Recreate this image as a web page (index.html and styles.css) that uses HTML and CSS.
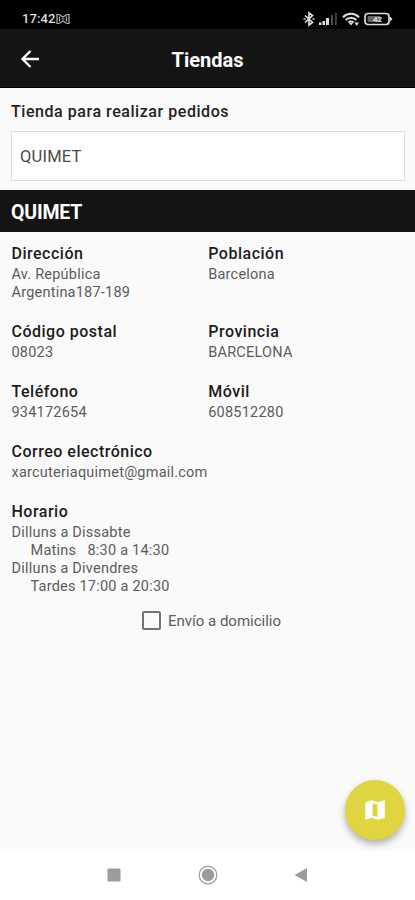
FILE: index.html
```
<!DOCTYPE html>
<html lang="es">
<head>
    <meta charset="UTF-8">
    <meta name="viewport" content="width=device-width, initial-scale=1.0">
    <title>Tiendas</title>
    <link rel="stylesheet" href="styles.css">
</head>
<body>
    <div class="status-bar">
        <span class="clock">17:42</span>
        <svg class="icon-notify" width="14" height="12" viewBox="0 0 14 12" fill="none" stroke="#b4b4b4" stroke-width="1.2">
            <path d="M1 10.500V1.500h2L7 4l4-2.500h2v9h-2L7 8l-4 2.500z"/>
            <path d="M3.500 3.500v5M10.500 3.500v5M5.500 6h3"/>
        </svg>
        <div class="status-icons">
            <svg width="12" height="16" viewBox="0 0 12 16" fill="none" stroke="#dedede" stroke-width="1.700">
                <path d="M2 4.500l7.500 7L6 14V2l3.500 2.500L2 11.500"/>
                <path d="M.5 8h2M9.500 8h2"/>
            </svg>
            <svg width="19" height="14" viewBox="0 0 19 14">
                <path fill="#dedede" d="M0 10.500h2.500v2.500H0zM3.500 9H6v4H3.500zM7 6h3v7H7z"/>
                <path fill="#4c4c4c" d="M12 3h2v10h-2zM16.200 1h1.500v12h-1.500z"/>
            </svg>
            <svg width="18" height="14" viewBox="0 0 18 14" fill="none" stroke="#dedede" stroke-width="2.100">
                <path d="M1 5.200c4.500-4.600 11.500-4.600 16 0M3.700 8c3-3 7.600-3 10.600 0M6.400 10.600c1.500-1.500 3.700-1.500 5.200 0"/>
                <path fill="#dedede" stroke="none" d="M7 11h4L9 13.500zM12.500 10.500H17L14.800 14z"/>
            </svg>
            <svg width="29" height="14" viewBox="0 0 29 14">
                <rect x="1" y="1.500" width="24" height="11" rx="3" fill="none" stroke="#dedede" stroke-width="1.700"/>
                <rect x="3.500" y="4" width="13" height="6" rx="1" fill="#666"/>
                <path fill="#dedede" d="M26 4.500l2.500 2.500L26 9.500z"/>
                <text x="13.500" y="10" class="battery-text">42</text>
            </svg>
        </div>
    </div>

    <header class="header">
        <svg class="back" width="24" height="24" viewBox="0 0 24 24" fill="none" stroke="#fff" stroke-width="2.400">
            <path d="M21 12H5M12.500 4L4.500 12l8 8"/>
        </svg>
        <h1>Tiendas</h1>
    </header>

    <main class="content">
        <div class="store-select">
            <label for="store">Tienda para realizar pedidos</label>
            <input type="text" id="store" value="QUIMET" readonly>
        </div>

        <h2 class="store-name">QUIMET</h2>

        <div class="details">
            <div class="field">
                <h3>Dirección</h3>
                <p>Av. República<br>Argentina187-189</p>
            </div>
            <div class="field">
                <h3>Población</h3>
                <p>Barcelona</p>
            </div>
            <div class="field">
                <h3>Código postal</h3>
                <p>08023</p>
            </div>
            <div class="field">
                <h3>Provincia</h3>
                <p>BARCELONA</p>
            </div>
            <div class="field">
                <h3>Teléfono</h3>
                <p>934172654</p>
            </div>
            <div class="field">
                <h3>Móvil</h3>
                <p>608512280</p>
            </div>
            <div class="field wide">
                <h3>Correo electrónico</h3>
                <p>xarcuteriaquimet@gmail.com</p>
            </div>
            <div class="field wide">
                <h3>Horario</h3>
                <p>Dilluns a Dissabte</p>
                <p class="hours"><span class="shift">Matins</span>8:30 a 14:30</p>
                <p>Dilluns a Divendres</p>
                <p class="hours">Tardes 17:00 a 20:30</p>
            </div>
        </div>

        <div class="delivery">
            <span class="checkbox"></span>
            <span>Envío a domicilio</span>
        </div>

        <!-- Map button -->
        <button class="fab" aria-label="Mapa">
            <svg width="22" height="22" viewBox="0 0 22 22">
                <path fill="#fff" fill-rule="evenodd" d="M1.300 3.200L7.500 1.200l7 2 5.700-2c.3-.1.600.1.600.5v17L14.500 20.800l-7-2-5.600 2c-.3.100-.6-.1-.6-.5zM8.500 4.200v12.300l5 1.500V5.700z"/>
            </svg>
        </button>
    </main>

    <nav class="nav-bar">
        <svg width="14" height="14" viewBox="0 0 14 14"><rect x=".5" y=".5" width="13" height="13" rx="1" fill="#9c9c9c"/></svg>
        <svg width="20" height="20" viewBox="0 0 20 20">
            <circle cx="10" cy="10" r="8.800" fill="none" stroke="#a4a4a4" stroke-width="1.400"/>
            <circle cx="10" cy="10" r="6.200" fill="#9c9c9c"/>
        </svg>
        <svg width="14" height="16" viewBox="0 0 14 16"><path fill="#9c9c9c" d="M13 1v14L.5 8z"/></svg>
    </nav>
</body>
</html>
```

FILE: styles.css
```
* {
    margin: 0;
    padding: 0;
    box-sizing: border-box;
}

body {
    font-family: Roboto, sans-serif;
    background: #fafafa;
    color: #5c5c5c;
    height: 900px;
    display: flex;
    flex-direction: column;
    overflow: hidden;
}

.status-bar {
    height: 29px;
    background: #000;
    display: flex;
    align-items: center;
    padding: 8px 22px 0 22px;
}

.clock {
    color: #dedede;
    font-size: 13px;
    font-weight: 500;
    letter-spacing: 0.1px;
}

.icon-notify {
    margin-left: 1px;
}

.status-icons {
    display: flex;
    align-items: center;
    gap: 4px;
    margin-left: auto;
}

.battery-text {
    font-size: 8px;
    font-weight: 700;
    text-anchor: middle;
    fill: #dedede;
}

.header {
    height: 59px;
    background: #141414;
    border-bottom: 1px solid #000;
    color: #fff;
    display: grid;
    grid-template-columns: 40px 1fr 40px;
    align-items: center;
    padding: 2px 18px 0;
}

.header h1 {
    font-size: 20px;
    font-weight: 700;
    text-align: center;
    padding-top: 2px;
}

.content {
    flex: 1;
    position: relative;
}

.store-select {
    padding: 14px 10px 9px 11px;
}

.store-select label {
    display: block;
    color: #222;
    font-size: 16px;
    line-height: 19px;
    font-weight: 500;
    letter-spacing: 0.55px;
    margin-bottom: 10px;
}

.store-select input {
    display: block;
    width: 100%;
    height: 50px;
    padding: 0 8px;
    border: 1px solid #dcdcdc;
    background: #fff;
    color: #4a4a4a;
    font-family: inherit;
    font-size: 16.5px;
    letter-spacing: 0.2px;
    outline: none;
}

.store-name {
    height: 42px;
    background: #141414;
    color: #fff;
    font-size: 19.5px;
    line-height: 45px;
    letter-spacing: -0.2px;
    padding-left: 11px;
}

.details {
    display: grid;
    grid-template-columns: 1fr 1fr;
    row-gap: 20px;
    padding: 12px 10px 0 11.5px;
}

.field h3 {
    color: #1c1c1c;
    font-size: 16px;
    line-height: 19px;
    font-weight: 500;
    letter-spacing: 0.5px;
    margin-bottom: 3px;
}

.field p {
    font-size: 14.5px;
    line-height: 18px;
    letter-spacing: 0.22px;
}

.wide {
    grid-column: 1 / 3;
}

.field .hours {
    padding-left: 19px;
}

.shift {
    display: inline-block;
    width: 57px;
}

.delivery {
    display: flex;
    align-items: center;
    justify-content: center;
    gap: 7px;
    margin-top: 15px;
    padding-left: 8px;
    font-size: 15px;
}

.checkbox {
    width: 19px;
    height: 19px;
    border: 2px solid #747474;
    border-radius: 2px;
}

.fab {
    position: absolute;
    right: 10px;
    bottom: 11px;
    width: 60px;
    height: 60px;
    border: none;
    border-radius: 50%;
    background: #dfd541;
    box-shadow: 0 4px 7px rgba(0, 0, 0, 0.3);
    display: flex;
    align-items: center;
    justify-content: center;
}

.nav-bar {
    height: 49px;
    background: #fff;
    display: flex;
    align-items: center;
    justify-content: space-between;
    padding: 0 107px 1px;
}
```
